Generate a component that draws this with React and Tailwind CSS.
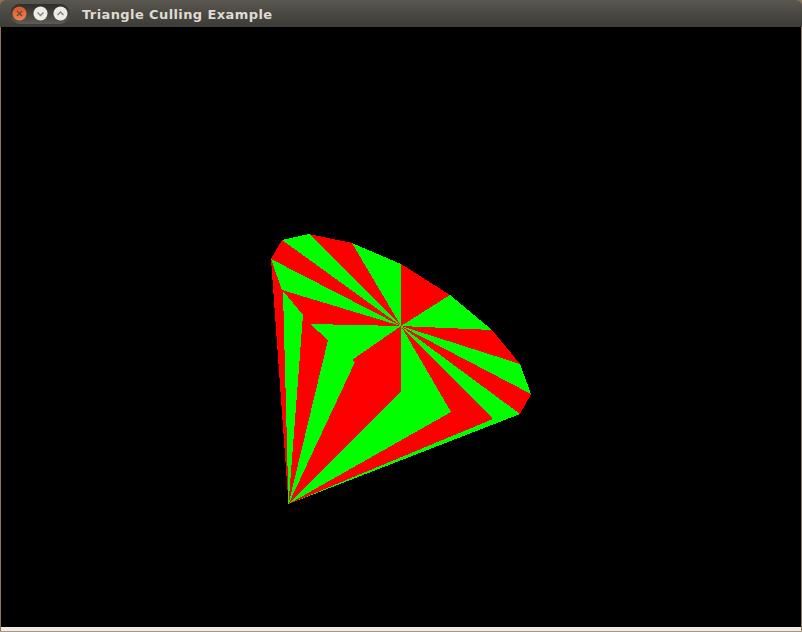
export default function App() {
  const c = "401,326";
  const apex = "288.5,504";
  const red = [
    `${c} 401,264 450,295`,
    `${c} 492,330 520,364`,
    `${c} 531,394 520,414`,
    `${c} 493,419 ${apex} 451,412`,
    `${c} 401,391 ${apex} 355,362 352,360`,
    `${c} 282,290 303,315 ${apex} 328,340 310,324`,
    `271,259 282,290 284,291 ${apex}`,
    `${c} 282,240 271,259`,
    `${c} 352,243 309,234`,
  ];
  const green = [
    `${c} 450,295 492,330`,
    `${c} 520,364 531,394`,
    `${c} 520,414 493,419`,
    `${apex} 493,419 520,414`,
    `${c} 451,412 ${apex} 401,391`,
    `310,324 ${c} 352,360 355,362 ${apex} 328,340`,
    `283,291 303,315 ${apex}`,
    `${c} 271,259 282,290`,
    `${c} 309,234 282,240`,
    `${c} 401,264 352,243`,
  ];
  return (
    <div className="w-[802px] h-[632px] bg-[#8a7558] flex flex-col overflow-hidden">
      <div className="h-[27px] shrink-0 rounded-t-[6px] bg-gradient-to-b from-[#5a5650] via-[#4b4943] to-[#3d3b36] flex items-center pl-[10px] gap-[12px]">
        <div className="w-[60px] h-[20px] rounded-full bg-gradient-to-b from-[#2e2d2a] to-[#5c5b55] flex items-center justify-between px-[2px]">
          <svg width="15" height="15" viewBox="0 0 15 15">
            <defs>
              <linearGradient id="closeFill" x1="0" y1="0" x2="0" y2="1">
                <stop offset="0" stopColor="#d9562c" />
                <stop offset="1" stopColor="#f58152" />
              </linearGradient>
            </defs>
            <circle cx="7.5" cy="7.5" r="7" fill="url(#closeFill)" />
            <path d="M5 5 10 10M10 5 5 10" stroke="#6e4a3a" strokeWidth="1.5" fill="none" />
          </svg>
          <svg width="15" height="15" viewBox="0 0 15 15">
            <circle cx="7.5" cy="7.5" r="7" fill="#eeece6" />
            <path d="M4.5 6.5 7.5 9.5 10.5 6.5" stroke="#8a877f" strokeWidth="1.5" fill="none" />
          </svg>
          <svg width="15" height="15" viewBox="0 0 15 15">
            <circle cx="7.5" cy="7.5" r="7" fill="#eeece6" />
            <path d="M4.5 9 7.5 6 10.5 9" stroke="#8a877f" strokeWidth="1.5" fill="none" />
          </svg>
        </div>
        <span className="pt-px text-[13px] font-bold leading-none text-[#dfdbd2] font-['DejaVu_Sans',sans-serif] tracking-[0.4px] whitespace-nowrap">
          Triangle Culling Example
        </span>
      </div>
      <div className="flex-1 flex pl-px pr-px">
        <div className="w-full h-[600px] bg-black">
          <svg width="800" height="600" viewBox="1 27 800 600" shapeRendering="crispEdges" className="block">
            {red.map((p) => (
              <polygon key={p} points={p} fill="#ff0000" />
            ))}
            {green.map((p) => (
              <polygon key={p} points={p} fill="#00ff00" />
            ))}
          </svg>
        </div>
      </div>
      <div className="h-[4px] shrink-0 mx-px bg-[#efebe2]"></div>
      <div className="h-px shrink-0 bg-[#a8997f]"></div>
    </div>
  );
}
